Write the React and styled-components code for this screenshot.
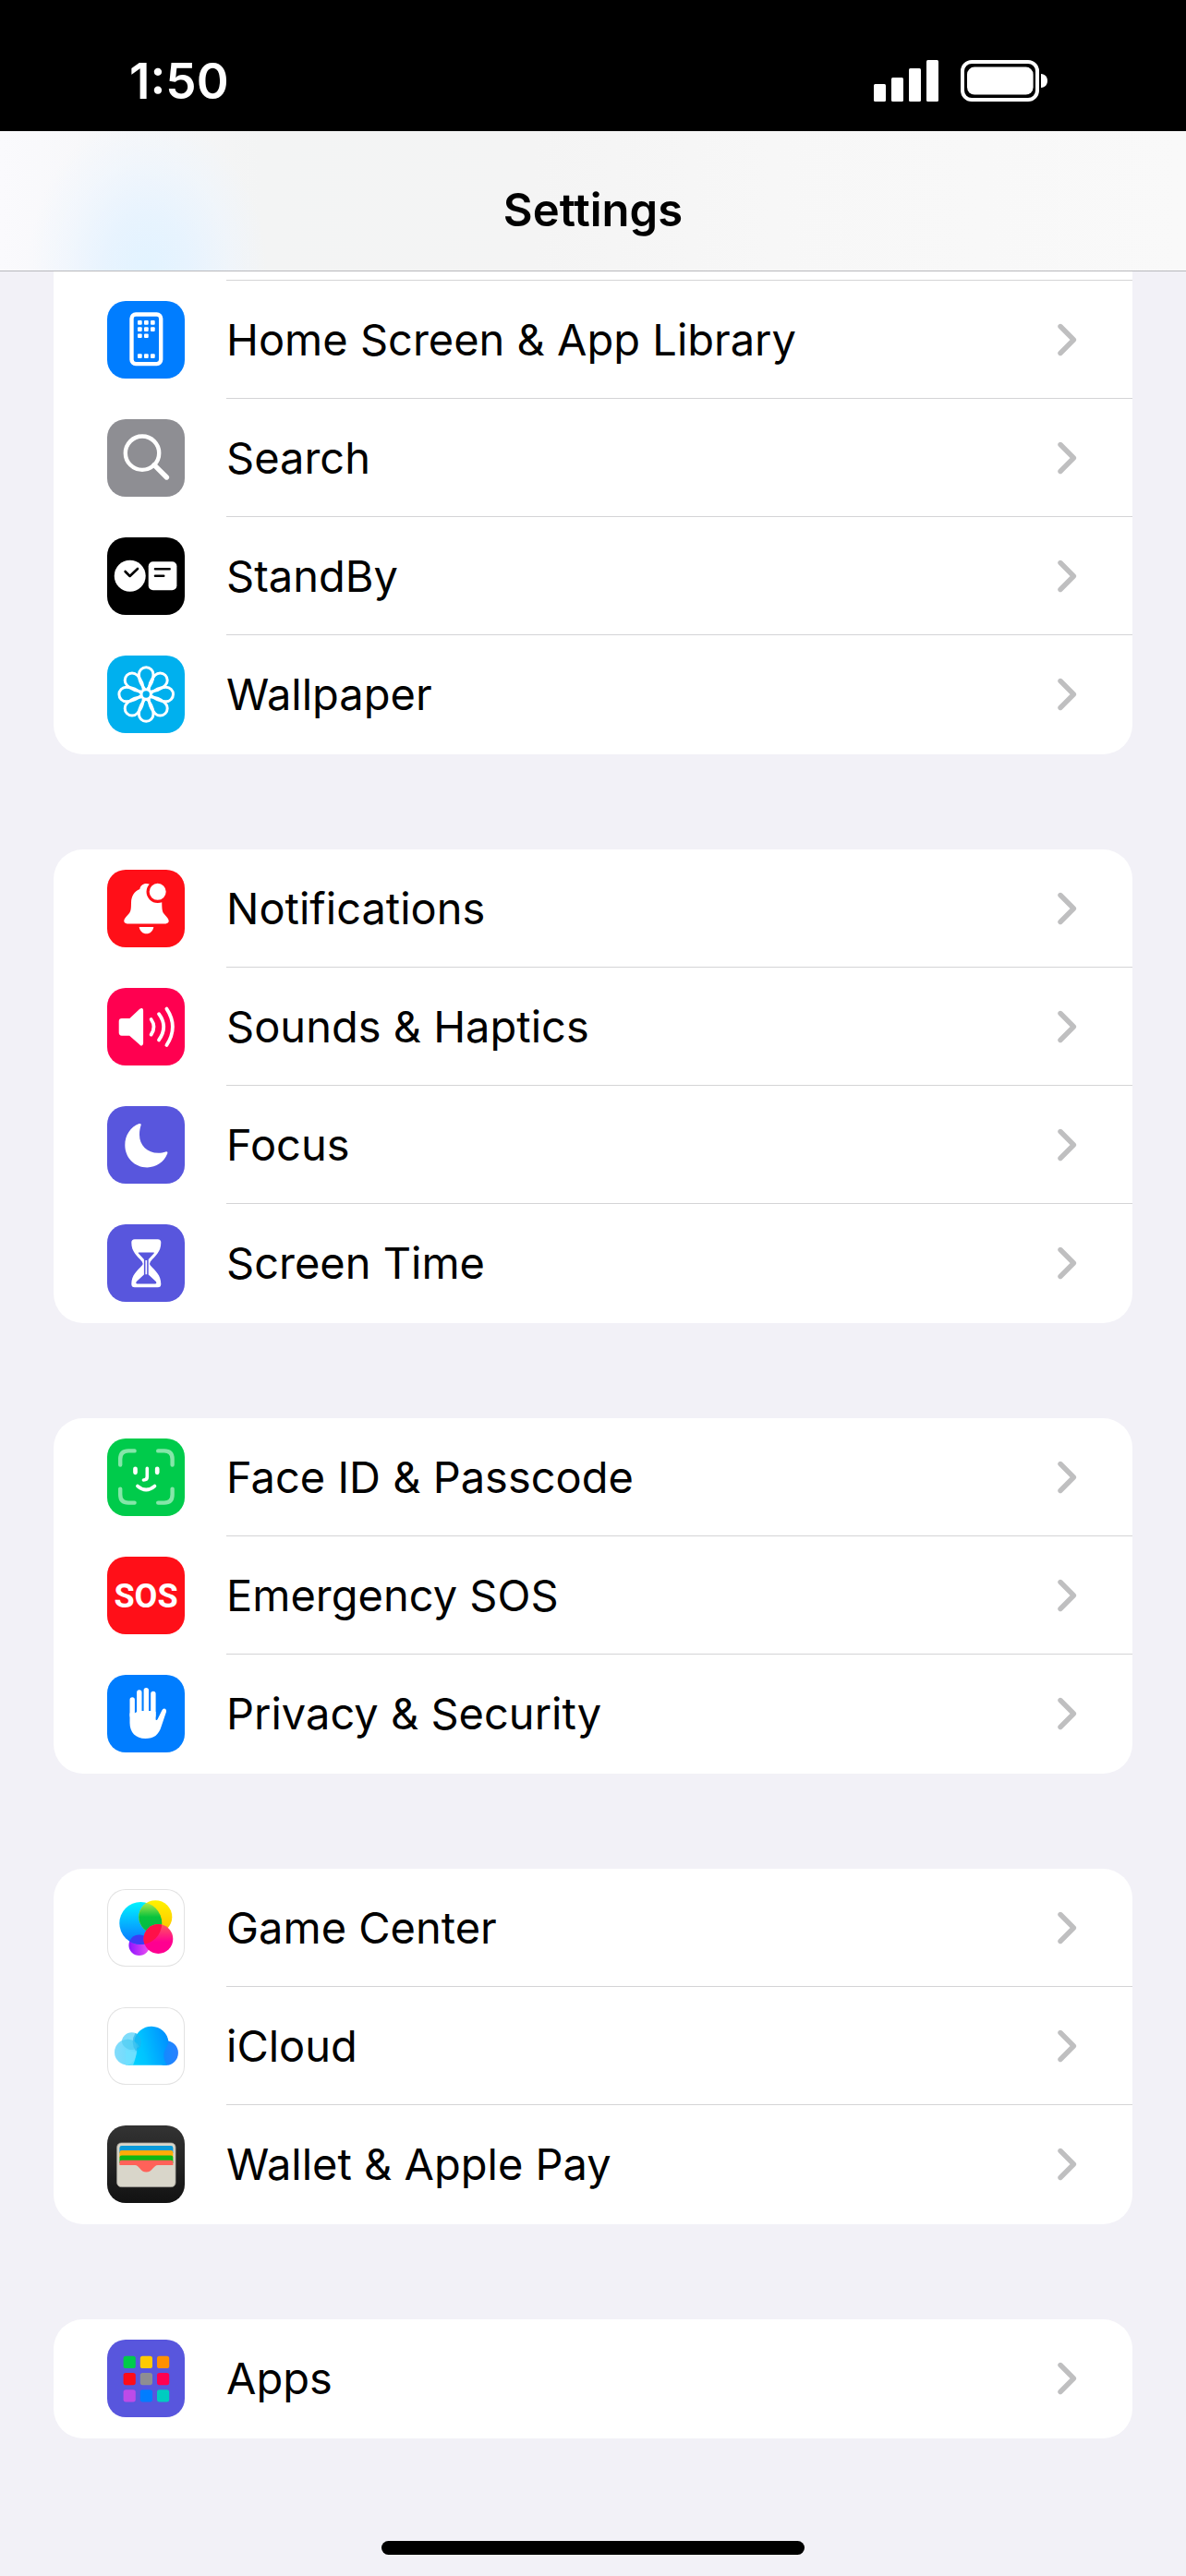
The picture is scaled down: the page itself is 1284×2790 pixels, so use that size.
import React from "react";
import styled, { createGlobalStyle } from "styled-components";

const GlobalStyle = createGlobalStyle`
  * { box-sizing: border-box; }
  body {
    margin: 0;
    background: #f2f1f7;
    color: #000;
    font-family: Inter, "Liberation Sans", sans-serif;
  }
`;

const Screen = styled.div`
  display: flex;
  flex-direction: column;
  min-height: 100vh;
`;

const StatusBar = styled.div`
  display: flex;
  align-items: center;
  justify-content: space-between;
  height: 142px;
  padding: 34px 148px 0 140px;
  background: #000;
  color: #fff;
`;

const Clock = styled.time`
  font-size: 53px;
  font-weight: 600;
  line-height: 64px;
`;

const StatusIcons = styled.div`
  display: flex;
  align-items: center;
  gap: 24px;

  svg { display: block; }
`;

const NavBar = styled.header`
  display: flex;
  justify-content: center;
  padding: 56px 0 35px;
  border-bottom: 1px solid #b8b8bc;
  background:
    radial-gradient(ellipse 130px 170px at 160px 100%, #e2f3ff 0%, rgba(230, 243, 255, 0.9) 35%, rgba(236, 245, 255, 0.5) 70%, rgba(244, 248, 255, 0) 100%),
    linear-gradient(90deg, #fafafd 0%, #f3f4f4 22%, #f4f4f4 45%, #f7f7f7 65%, #f9f9f9 100%);
`;

const Title = styled.h1`
  margin: 0;
  font-size: 49px;
  font-weight: 600;
  line-height: 60px;
`;

const Groups = styled.main`
  display: flex;
  flex-direction: column;
  gap: 103px;
  padding: 0 58px;
`;

const Group = styled.ul`
  margin: 0;
  padding: 0 0 1px;
  list-style: none;
  background: #fff;
  border-radius: ${(p) => (p.$continued ? "0 0 32px 32px" : "32px")};
`;

const HiddenRowEdge = styled.li`
  height: 10px;
  margin-left: 187px;
  border-bottom: 1px solid #d4d4d6;
`;

const Row = styled.a`
  display: flex;
  align-items: center;
  gap: 45px;
  height: 128px;
  padding-left: 58px;
  color: inherit;
  text-decoration: none;
`;

const Tile = styled.svg`
  flex: none;
  width: 84px;
  height: 84px;
  border-radius: 20px;
  background: ${(p) => p.$bg};
  box-shadow: ${(p) => (p.$outlined ? "inset 0 0 0 1px #e2e2e2" : "none")};
`;

const RowBody = styled.span`
  flex: 1;
  display: flex;
  align-items: center;
  justify-content: space-between;
  height: 100%;
  padding-right: 60px;
  border-bottom: 1px solid #d4d4d6;

  li:last-child & { border-bottom-color: transparent; }
`;

const Label = styled.span`
  font-size: 47px;
  line-height: 60px;
`;

const Chevron = styled.svg`
  flex: none;
  width: 22px;
  height: 38px;
`;

const SosText = styled.text`
  font-family: Roboto, "Liberation Sans", sans-serif;
  font-size: 36px;
  font-weight: 700;
`;

const HomeArea = styled.footer`
  display: flex;
  justify-content: center;
  margin-top: auto;
  padding: 111px 0 23px;
`;

const HomeIndicator = styled.div`
  width: 458px;
  height: 15px;
  border-radius: 8px;
  background: #000;
`;

const HomeScreenArt = () => (
  <g fill="#fff">
    <rect x="26.5" y="14.5" width="31.7" height="53.6" rx="4.5" fill="none" stroke="#fff" strokeWidth="4.4" />
    {[
      [33, 21], [40, 21], [47, 21],
      [33, 28.2], [40, 28.2], [47, 28.2],
      [33, 35.4], [40, 35.4],
      [33, 57.3], [40, 57.3], [47, 57.3],
    ].map(([x, y]) => (
      <rect key={`${x}-${y}`} x={x} y={y} width="4.7" height="4.7" rx="1" />
    ))}
  </g>
);

const SearchArt = () => (
  <g fill="none" stroke="#fff" strokeLinecap="round">
    <circle cx="38" cy="36.7" r="18.2" strokeWidth="4.4" />
    <path d="M51 49.6 64.4 63" strokeWidth="5.4" />
  </g>
);

const StandByArt = () => (
  <g>
    <circle cx="24.7" cy="41.7" r="17" fill="#fff" />
    <rect x="44.7" y="26.3" width="30.7" height="31" rx="5" fill="#fff" />
    <path d="M19.6 37 24.6 42 33 34M52 34.3H67.6M52 41.8H61.2" fill="none" stroke="#000" strokeWidth="2.6" strokeLinecap="round" strokeLinejoin="round" />
  </g>
);

const WallpaperArt = () => (
  <g transform="translate(42.2 42)" fill="none" stroke="#fff" strokeWidth="3">
    {[0, 45, 90, 135, 180, 225, 270, 315].map((a) => (
      <path key={a} transform={`rotate(${a})`} d="M0-4C-5-9-7.8-14.5-7.8-21.5A7.8 7.8 0 0 1 7.8-21.5C7.8-14.5 5-9 0-4Z" />
    ))}
    <circle r="4.8" fill="#00b0ee" strokeWidth="2.2" />
  </g>
);

const BellArt = () => (
  <g fill="#fff">
    <path d="M42.5 15C38.5 15 36 17.4 35.3 21C29.4 23.5 26.2 28.5 26 35.5C25.9 41 26 44.6 23.6 47.6C21.4 50.4 18.3 52.6 18.3 55.6C18.3 57.4 19.6 58.4 21.6 58.4H63.4C65.4 58.4 66.7 57.4 66.7 55.6C66.7 52.6 63.4 50.4 61.4 47.6C59.2 44.6 59.4 41 59.2 34L54 20L46 15.8C45 15.3 43.8 15 42.5 15Z" />
    <path d="M34.7 62H50.3C49.6 66.6 46.5 69.3 42.5 69.3C38.5 69.3 35.4 66.6 34.7 62Z" />
    <circle cx="54.7" cy="23.8" r="10.6" stroke="#ff0f18" strokeWidth="3.2" />
  </g>
);

const SpeakerArt = () => (
  <g fill="#fff" stroke="#fff" strokeLinecap="round" strokeLinejoin="round">
    <path d="M15.8 34.2H24.6L36 23.6Q38 22 38 24.6V59.8Q38 62.4 36 60.8L24.6 50.6H15.8Q13.8 50.6 13.8 48.6V36.2Q13.8 34.2 15.8 34.2Z" strokeWidth="2.2" />
    <path d="M47.6 34Q53.4 42.2 47.6 50.6M56 28.2Q66.4 42 56 56.4M64.4 22.6Q77.4 42 64.4 62" fill="none" strokeWidth="3.8" />
  </g>
);

const MoonArt = () => (
  <path fill="#fff" d="M34.6 19.1C25.4 22.5 19.3 31.7 19.3 42.2C19.3 55.8 29.8 66.4 43.4 66.4C53.2 66.4 61.5 60.8 65.2 51.6C65.9 49.8 65 49 63.4 49.4C61 50.2 58 50.8 55.4 50.8C43.4 50.8 35 42.6 35 31C35 27 35.6 23.6 36.6 20.8C37.1 19.2 36.2 18.5 34.6 19.1Z" />
);

const HourglassArt = () => (
  <g>
    <path fill="#fff" d="M29.8 16.3H54.8Q58.3 16.3 58.3 19.8C58.3 30 52.2 34.2 46.8 40.4Q45.4 42.6 46.8 44.6C52.2 50.6 58.3 55 58.3 64.8Q58.3 68.3 54.8 68.3H29.8Q26.3 68.3 26.3 64.8C26.3 55 32.4 50.6 37.8 44.6Q39.4 42.6 37.8 40.4C32.4 34.2 26.3 30 26.3 19.8Q26.3 16.3 29.8 16.3Z" />
    <path fill="#5856dd" d="M34.3 30.4H50.3Q51.4 30.4 50.7 31.4L44.7 38V54.4L52.8 62Q54.2 64.4 52 64.4H32.6Q30.4 64.4 31.8 62L39.9 54.4V38L33.9 31.4Q33.2 30.4 34.3 30.4Z" />
    <path d="M42.3 39V54.2" stroke="#fff" strokeWidth="1.7" />
  </g>
);

const FaceIdArt = () => (
  <g fill="none" stroke="#fff" strokeLinecap="round">
    <path opacity=".52" strokeWidth="4.4" d="M29.6 13.4H23Q14.2 13.4 14.2 22.2V28.6M55.2 13.4H61.8Q70.6 13.4 70.6 22.2V28.6M29.6 69.6H23Q14.2 69.6 14.2 60.8V54.6M55.2 69.6H61.8Q70.6 69.6 70.6 60.8V54.6" />
    <path strokeWidth="4.7" d="M30.5 32.8V36.8M54.2 32.8V36.8" />
    <path strokeWidth="3.6" d="M43.3 32.4V41.6Q43.3 45 39.4 45" />
    <path strokeWidth="3.8" d="M33 51.6Q42.2 59.4 51.4 51.6" />
  </g>
);

const SosArt = () => (
  <SosText x="42" y="55" textAnchor="middle" fill="#fff">SOS</SosText>
);

const HandArt = () => (
  <g fill="#fff">
    <path d="M27.2 27V44M34.8 19V44M42.3 16.6V44M49.9 20.4V44" stroke="#fff" strokeWidth="5.4" strokeLinecap="round" />
    <path d="M24.5 41.4H29.9L31.2 40.6L37 39H50L52.6 40V48.4Q53.6 49.6 54.6 48L59.3 38.4Q60.6 36 62.8 36.8Q64.6 37.6 64 40L58.6 56C55.8 65 50.6 69 41.4 69C31 69 24.5 62.4 24.5 52Z" />
  </g>
);

const GameCenterArt = () => (
  <g>
    <defs>
      <linearGradient id="gcBlue" x1="0" y1="0" x2="0" y2="1"><stop offset="0" stopColor="#00f4ff" /><stop offset="1" stopColor="#0a72ff" /></linearGradient>
      <linearGradient id="gcYellow" x1="0" y1="0" x2="0" y2="1"><stop offset="0" stopColor="#fff200" /><stop offset="1" stopColor="#ffc000" /></linearGradient>
      <linearGradient id="gcGreen" x1="0" y1="0" x2="0" y2="1"><stop offset="0" stopColor="#c8ee50" /><stop offset=".5" stopColor="#08c33c" /><stop offset="1" stopColor="#00b84a" /></linearGradient>
      <linearGradient id="gcRed" x1="0" y1="0" x2="0" y2="1"><stop offset="0" stopColor="#ff5a5c" /><stop offset=".6" stopColor="#ff0090" /><stop offset="1" stopColor="#ff0090" /></linearGradient>
      <linearGradient id="gcPurple"><stop offset="0" stopColor="#8c14ff" /><stop offset="1" stopColor="#f050f0" /></linearGradient>
      <clipPath id="gcBlueClip"><circle cx="36.3" cy="37" r="23" /></clipPath>
    </defs>
    <circle cx="34.7" cy="60.7" r="11.3" fill="url(#gcPurple)" />
    <circle cx="36.3" cy="37" r="23" fill="url(#gcBlue)" />
    <circle cx="52.3" cy="30.2" r="18" fill="url(#gcYellow)" />
    <g clipPath="url(#gcBlueClip)">
      <circle cx="52.3" cy="30.2" r="18" fill="url(#gcGreen)" />
      <circle cx="34.7" cy="60.7" r="11.3" fill="#3c3cf4" />
    </g>
    <circle cx="55.4" cy="54" r="15.9" fill="url(#gcRed)" />
    <g clipPath="url(#gcBlueClip)">
      <circle cx="55.4" cy="54" r="15.9" fill="#ff1048" />
    </g>
  </g>
);

const CloudArt = () => (
  <g>
    <defs>
      <linearGradient id="icBody" x1="0" y1=".6" x2="1" y2=".35"><stop offset="0" stopColor="#00d2ff" /><stop offset=".35" stopColor="#00c4ff" /><stop offset="1" stopColor="#0090ff" /></linearGradient>
      <linearGradient id="icLeft"><stop offset="0" stopColor="#84dcfb" /><stop offset="1" stopColor="#5cdcff" /></linearGradient>
      <linearGradient id="icRight"><stop offset="0" stopColor="#0092ff" /><stop offset="1" stopColor="#2a80ff" /></linearGradient>
    </defs>
    <circle cx="26.7" cy="38.2" r="11" fill="#80dcfa" />
    <circle cx="22" cy="48.7" r="14" fill="url(#icLeft)" />
    <circle cx="63.6" cy="49.5" r="13.3" fill="url(#icRight)" />
    <path fill="url(#icBody)" d="M29.4 36.2A18.7 18.7 0 0 1 66.4 37.2C66.4 42 61.4 45 61.2 52C61.4 57 63 60.4 65 62.8H22C29 60 32.2 54 32.2 46Q32 40 29.4 36.2Z" />
    <path fill="#6fe0ff" opacity=".85" d="M20 62.7H28C30 58 31.2 54 31.2 49L20 46Z" />
    <path fill="#22b2ee" opacity=".65" d="M30.6 28A11 11 0 0 1 31 47.6A17 17 0 0 1 30.6 28Z" />
    <path fill="#44c6ee" opacity=".5" d="M15.8 36.4A14 14 0 0 1 34.6 42.6A11 11 0 0 1 15.8 36.4Z" />
  </g>
);

const WalletArt = () => (
  <g>
    <rect x="10.7" y="19" width="63.3" height="47.6" rx="4.6" fill="#d9d6ca" stroke="#a9a79e" strokeWidth=".8" />
    <path d="M13.4 30V24.4Q13.4 22 15.8 22H69Q71.4 22 71.4 24.4V30Z" fill="#0a9ad8" />
    <path d="M13.4 35V29.4Q13.4 27 15.8 27H69Q71.4 27 71.4 29.4V35Z" fill="#ffab08" />
    <path d="M13.4 41V35Q13.4 32.6 15.8 32.6H69Q71.4 32.6 71.4 35V41Z" fill="#0fb814" />
    <path d="M13.4 43V40Q13.4 37.8 15.8 37.8H69Q71.4 37.8 71.4 40V43H55C50 43 49 50.6 42.4 50.6C35.8 50.6 35 43 30 43Z" fill="#ff6259" />
  </g>
);

const AppsArt = () => (
  <g>
    {["#00cb4b", "#ffca00", "#ff9000", "#ff0c18", "#8e8e93", "#ff0050", "#bd4be8", "#007dff", "#00ccc0"].map((c, i) => (
      <rect key={c} x={17.6 + (i % 3) * 18.2} y={17.8 + Math.floor(i / 3) * 18.2} width="13.2" height="13.2" rx="2.6" fill={c} />
    ))}
  </g>
);

const GROUPS = [
  [
    { label: "Home Screen & App Library", bg: "#007dff", Art: HomeScreenArt },
    { label: "Search", bg: "#8e8e93", Art: SearchArt },
    { label: "StandBy", bg: "#000", Art: StandByArt },
    { label: "Wallpaper", bg: "#00b0ee", Art: WallpaperArt },
  ],
  [
    { label: "Notifications", bg: "#ff0f18", Art: BellArt },
    { label: "Sounds & Haptics", bg: "#ff0050", Art: SpeakerArt },
    { label: "Focus", bg: "#5856dd", Art: MoonArt },
    { label: "Screen Time", bg: "#5856dd", Art: HourglassArt },
  ],
  [
    { label: "Face ID & Passcode", bg: "#00cb4b", Art: FaceIdArt },
    { label: "Emergency SOS", bg: "#ff0f18", Art: SosArt },
    { label: "Privacy & Security", bg: "#007dff", Art: HandArt },
  ],
  [
    { label: "Game Center", bg: "#fff", outlined: true, Art: GameCenterArt },
    { label: "iCloud", bg: "#fff", outlined: true, Art: CloudArt },
    { label: "Wallet & Apple Pay", bg: "linear-gradient(#333, #121212)", Art: WalletArt },
  ],
  [{ label: "Apps", bg: "#5856dd", Art: AppsArt }],
];

function SettingsRow({ label, bg, outlined, Art }) {
  return (
    <li>
      <Row href="#">
        <Tile viewBox="0 0 84 84" $bg={bg} $outlined={outlined} aria-hidden="true">
          <Art />
        </Tile>
        <RowBody>
          <Label>{label}</Label>
          <Chevron viewBox="0 0 22 38" aria-hidden="true">
            <path d="M4 4.5 18.4 19 4 33.5" fill="none" stroke="#bfbfc0" strokeWidth="5.4" strokeLinecap="round" strokeLinejoin="round" />
          </Chevron>
        </RowBody>
      </Row>
    </li>
  );
}

export default function App() {
  return (
    <Screen>
      <GlobalStyle />
      <StatusBar>
        <Clock>1:50</Clock>
        <StatusIcons>
          <svg width="70" height="46" viewBox="0 0 70 46" fill="#fff" aria-hidden="true">
            <rect x="0" y="26" width="13" height="19" rx="1.5" />
            <rect x="19" y="19" width="13" height="26" rx="1.5" />
            <rect x="38" y="9" width="13" height="36" rx="1.5" />
            <rect x="57" y="0" width="13" height="45" rx="1.5" />
          </svg>
          <svg width="96" height="46" viewBox="0 0 96 46" fill="#fff" aria-hidden="true">
            <rect x="2" y="2" width="81" height="41" rx="10" fill="none" stroke="#fff" strokeWidth="4" />
            <rect x="7" y="7.6" width="71.6" height="30" rx="8" />
            <path d="M87 15C91.6 15.4 94 18.4 94 22.5S91.6 29.6 87 30Z" />
          </svg>
        </StatusIcons>
      </StatusBar>
      <NavBar>
        <Title>Settings</Title>
      </NavBar>
      <Groups>
        {GROUPS.map((rows, i) => (
          <Group key={rows[0].label} $continued={i === 0}>
            {i === 0 && <HiddenRowEdge aria-hidden="true" />}
            {rows.map((row) => (
              <SettingsRow key={row.label} {...row} />
            ))}
          </Group>
        ))}
      </Groups>
      <HomeArea>
        <HomeIndicator />
      </HomeArea>
    </Screen>
  );
}
